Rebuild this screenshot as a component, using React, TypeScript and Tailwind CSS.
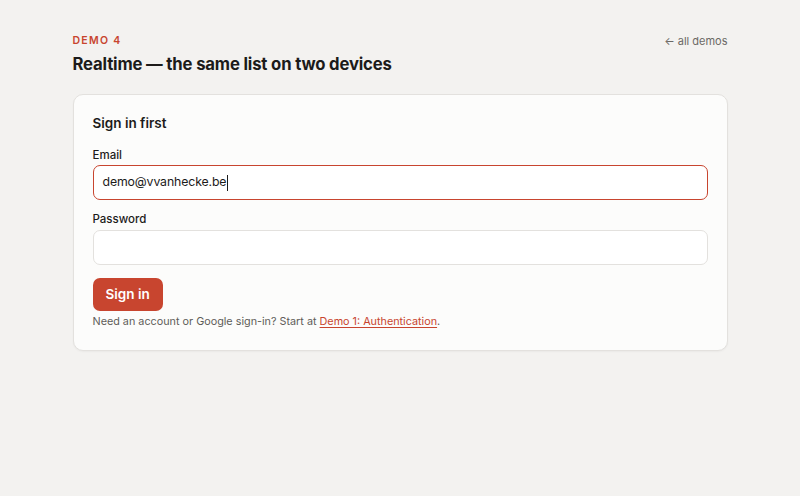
export default function App() {
  return (
    <div
      className="min-h-[496px] bg-[#f3f2f0] text-[#1c1b1a]"
      style={{ fontFamily: "Inter, 'Noto Sans', sans-serif" }}
    >
      <div className="mx-auto w-[655px] pt-[34px]">
        <header className="flex items-start justify-between">
          <div>
            <div className="text-[10.5px] font-semibold uppercase tracking-[0.12em] text-[#c8452f] leading-[14px]">
              Demo 4
            </div>
            <h1 className="mt-[5px] text-[16.7px] font-bold leading-[22px] tracking-[-0.01em]">
              Realtime — the same list on two devices
            </h1>
          </div>
          <a className="mt-[-1px] text-[11px] text-[#6b6965] leading-[16px]" href="#">
            ← all demos
          </a>
        </header>

        <section className="mt-[19px] rounded-[10px] border border-[#e3e1de] bg-[#fcfcfb] px-[19px] pt-[18px] pb-[20px] shadow-[0_1px_2px_rgba(0,0,0,0.04)]">
          <h2 className="text-[13.5px] font-semibold leading-[20px]">Sign in first</h2>

          <label className="mt-[14px] block text-[11.5px] font-medium leading-[16px]">Email</label>
          <div className="mt-[2px] flex h-[35px] items-center rounded-[7px] border-[1.5px] border-[#c8452f] bg-white px-[9px] text-[12.3px] tracking-[-0.01em]">
            demo@vvanhecke.be
            <span className="ml-px inline-block h-[16px] w-px bg-[#1c1b1a]" />
          </div>

          <label className="mt-[11px] block text-[11.5px] font-medium leading-[16px]">Password</label>
          <div className="mt-[3px] h-[35px] rounded-[7px] border border-[#e3e1de] bg-white" />

          <button className="mt-[13px] h-[33px] rounded-[7px] bg-[#c8452f] px-[13px] text-[13.5px] font-semibold text-white">
            Sign in
          </button>

          <p className="mt-[3px] text-[10.8px] leading-[16px] text-[#5f5d59]">
            Need an account or Google sign-in? Start at{" "}
            <a href="#" className="text-[#c8452f] underline underline-offset-2">
              Demo 1: Authentication
            </a>
            .
          </p>
        </section>
      </div>
    </div>
  );
}
